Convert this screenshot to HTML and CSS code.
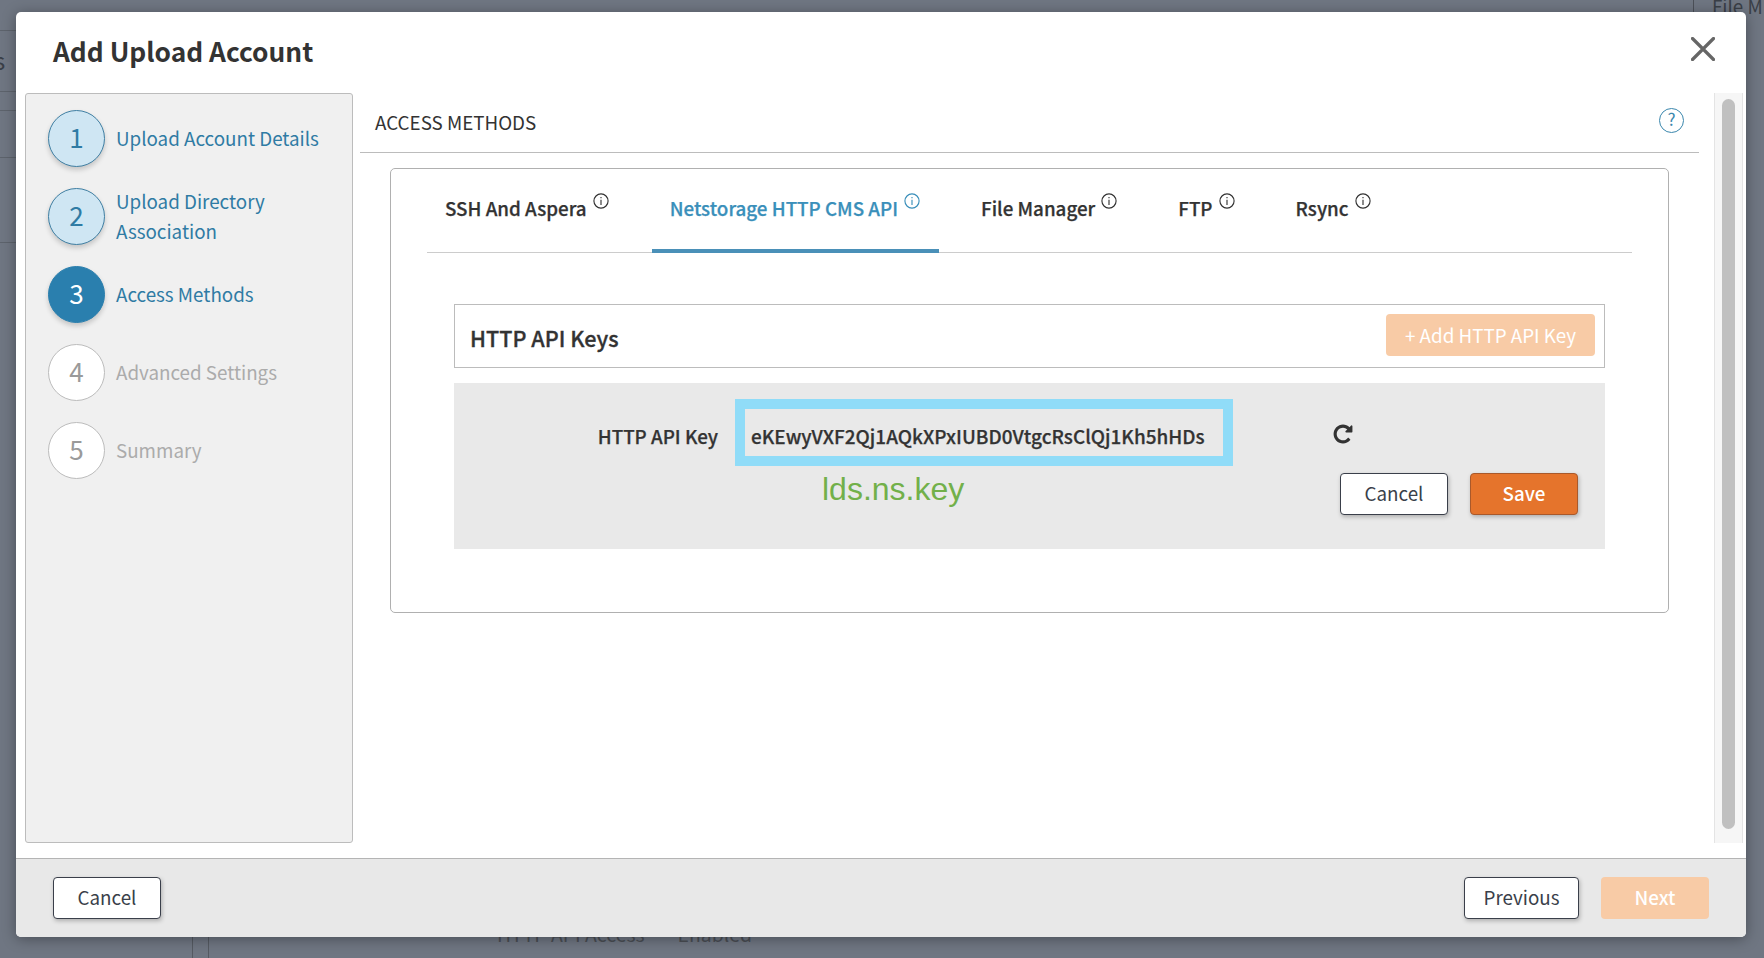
FILE: index.html
```html
<!doctype html>
<html lang="en">
<head>
	<meta charset="UTF-8">
	<title>Add Upload Account</title>
	<link rel="stylesheet" href="styles.css">
</head>
<body>
	<div class="page">
		<div class="rail-left">
			<div class="rail-row r30"></div>
			<div class="rail-row r61"><span class="rail-s">s</span></div>
			<div class="rail-row r19"></div>
			<div class="rail-row r47"></div>
			<div class="rail-row r85"></div>
		</div>
		<div class="page-mid">
			<div class="page-top"><span class="page-file">File M</span></div>
			<div class="page-bottom">
				<span class="page-divider"></span>
				<span class="page-access">HTTP API Access</span>
				<span class="page-enabled">Enabled</span>
			</div>
		</div>
	</div>

	<div class="modal">
		<div class="modal-head">
			<h1 class="modal-title">Add Upload Account</h1>
			<a href="javascript:;" class="modal-close">
				<svg width="24" height="24" viewBox="0 0 24 24"><path d="M1.5 1.5l21 21M22.5 1.5l-21 21" fill="none" stroke="#666" stroke-width="3.2" stroke-linecap="round"/></svg>
			</a>
		</div>

		<div class="modal-body">
			<ul class="steps">
				<li class="step done">
					<span class="step-num">1</span>
					<span class="step-label">Upload Account Details</span>
				</li>
				<li class="step done">
					<span class="step-num">2</span>
					<span class="step-label">Upload Directory Association</span>
				</li>
				<li class="step active">
					<span class="step-num">3</span>
					<span class="step-label">Access Methods</span>
				</li>
				<li class="step">
					<span class="step-num">4</span>
					<span class="step-label">Advanced Settings</span>
				</li>
				<li class="step">
					<span class="step-num">5</span>
					<span class="step-label">Summary</span>
				</li>
			</ul>

			<div class="content">
				<div class="section-head">
					<span class="section-title">ACCESS METHODS</span>
					<span class="help">?</span>
				</div>

				<div class="card">
					<div class="tabs">
						<a href="javascript:;" class="tab">SSH And Aspera
							<svg class="info" viewBox="0 0 14 14"><circle cx="7" cy="7" r="6.2"/><path d="M7 6v4.4M7 3.4v1.2"/></svg>
						</a>
						<a href="javascript:;" class="tab current">Netstorage HTTP CMS API
							<svg class="info" viewBox="0 0 14 14"><circle cx="7" cy="7" r="6.2"/><path d="M7 6v4.4M7 3.4v1.2"/></svg>
						</a>
						<a href="javascript:;" class="tab">File Manager
							<svg class="info" viewBox="0 0 14 14"><circle cx="7" cy="7" r="6.2"/><path d="M7 6v4.4M7 3.4v1.2"/></svg>
						</a>
						<a href="javascript:;" class="tab">FTP
							<svg class="info" viewBox="0 0 14 14"><circle cx="7" cy="7" r="6.2"/><path d="M7 6v4.4M7 3.4v1.2"/></svg>
						</a>
						<a href="javascript:;" class="tab">Rsync
							<svg class="info" viewBox="0 0 14 14"><circle cx="7" cy="7" r="6.2"/><path d="M7 6v4.4M7 3.4v1.2"/></svg>
						</a>
					</div>

					<div class="keys-head">
						<span class="keys-title">HTTP API Keys</span>
						<a href="javascript:;" class="btn btn-add">+ Add HTTP API Key</a>
					</div>

					<div class="key-form">
						<div class="key-row">
							<label class="key-label">HTTP API Key</label>
							<div class="key-mark"><span class="key-value">eKEwyVXF2Qj1AQkXPxIUBD0VtgcRsClQj1Kh5hHDs</span></div>
							<svg class="key-refresh" width="22" height="22" viewBox="0 0 1792 1792"><path fill="#333" d="M1664 256v448q0 26-19 45t-45 19h-448q-42 0-59-40-17-39 14-69l138-138q-148-137-349-137-104 0-198.5 40.5t-163.5 109.5-109.5 163.5-40.5 198.5 40.5 198.5 109.5 163.5 163.5 109.5 198.5 40.5q119 0 225-52t179-147q7-10 23-12 15 0 25 9l137 138q9 8 9.5 20.5t-7.5 22.5q-109 132-264 204.5t-327 72.5q-156 0-298-61t-245-164-164-245-61-298 61-298 164-245 245-164 298-61q147 0 284.5 55.5t244.5 156.5l130-129q29-31 70-14 39 17 39 59z"/></svg>
						</div>
						<div class="key-actions">
							<a href="javascript:;" class="btn btn-plain">Cancel</a>
							<a href="javascript:;" class="btn btn-save">Save</a>
						</div>
						<span class="key-note">lds.ns.key</span>
					</div>
				</div>
			</div>

			<div class="scroll"><div class="scroll-thumb"></div></div>
		</div>

		<div class="modal-foot">
			<a href="javascript:;" class="btn btn-plain btn-foot">Cancel</a>
			<div class="foot-right">
				<a href="javascript:;" class="btn btn-plain btn-prev">Previous</a>
				<a href="javascript:;" class="btn btn-next">Next</a>
			</div>
		</div>
	</div>
</body>
</html>
```

FILE: styles.css
```css
*{
	box-sizing: border-box;
}
html,body{
	height: 100%;
}
body{
	margin: 0;
	background-color: #6f7682;
	color: #333;
	font-family: "Noto Sans CJK SC", "Noto Sans", sans-serif;
	font-size: 18.8px;
	overflow: hidden;
}
h1,ul{
	margin: 0;
	padding: 0;
}
a{
	text-decoration: none;
	color: inherit;
}
li{
	list-style: none;
}

/* page behind the dialog */
.page{
	display: flex;
	height: 100%;
}
.rail-left{
	width: 16px;
}
.rail-row{
	border-bottom: 1px solid #5d636c;
}
.r30{ height: 31px; }
.r61{ height: 61px; line-height: 58px; }
.r19{ height: 19px; }
.r47{ height: 47px; }
.r85{ height: 85px; }
.rail-s{
	display: block;
	margin-left: -6px;
	color: #3a3f47;
	font-size: 24px;
}
.page-mid{
	flex: 1;
	display: flex;
	flex-direction: column;
	justify-content: space-between;
}
.page-top{
	display: flex;
	justify-content: flex-end;
	height: 20px;
	line-height: 12px;
	overflow: hidden;
}
.page-file{
	width: 71px;
	padding-left: 18px;
	border-left: 1px solid #4c5058;
	color: #3a3f47;
	overflow: hidden;
	white-space: nowrap;
}
.page-bottom{
	display: flex;
	align-items: flex-start;
	height: 21px;
	font-size: 19.4px;
	color: #4a4e55;
}
.page-divider{
	width: 17px;
	height: 21px;
	margin-left: 176px;
	border-left: 1px solid #555a62;
	border-right: 1px solid #555a62;
}
.page-access{
	margin-left: 288px;
	margin-top: -15px;
	line-height: 24px;
}
.page-enabled{
	margin-left: 33px;
	margin-top: -15px;
	line-height: 24px;
}

/* dialog */
.modal{
	position: absolute;
	left: 16px;
	top: 12px;
	width: 1730px;
	height: 925px;
	display: flex;
	flex-direction: column;
	background-color: #fff;
	border-radius: 5px;
	box-shadow: 0 2px 14px rgba(0,0,0,.35);
	overflow: hidden;
}
.modal-head{
	height: 81px;
	flex: none;
	display: flex;
	justify-content: space-between;
	padding: 21px 31px 0 37px;
}
.modal-title{
	font-size: 26.3px;
	font-weight: 700;
	line-height: 36px;
	color: #333;
}
.modal-close{
	height: 24px;
	margin-top: 4px;
}
.modal-body{
	flex: 1;
	display: flex;
	padding-left: 9px;
}

/* wizard steps */
.steps{
	width: 328px;
	height: 750px;
	flex: none;
	padding: 16px 22px;
	background-color: #f0f0f0;
	border: 1px solid #bcbcbc;
	border-radius: 3px;
}
.step{
	display: flex;
	align-items: center;
	gap: 11px;
	height: 57px;
	margin-bottom: 21px;
	color: #ababab;
}
.step-num{
	width: 57px;
	height: 57px;
	flex: none;
	border: 1px solid #bcbcbc;
	border-radius: 50%;
	background-color: #fff;
	font-size: 26px;
	line-height: 52px;
	text-align: center;
	color: #9a9a9a;
}
.step-label{
	line-height: 30px;
	margin-top: -2px;
}
.step.done,.step.active{
	color: #2f7ba4;
}
.step.done .step-num{
	background-color: #cfe6f3;
	border-color: #3f7fa3;
	color: #2f7ba4;
	box-shadow: 0 3px 5px rgba(0,0,0,.18);
}
.step.active .step-num{
	background-color: #2a7fae;
	border-color: #2a7fae;
	color: #fff;
	box-shadow: 0 3px 5px rgba(0,0,0,.18);
}

/* main column */
.content{
	width: 1339px;
	margin-left: 7px;
	flex: none;
}
.section-head{
	height: 60px;
	display: flex;
	justify-content: space-between;
	align-items: center;
	padding: 0 15px;
	border-bottom: 1px solid #bcbcbc;
}
.section-title{
	line-height: 26px;
	margin-top: -2px;
}
.help{
	width: 25px;
	height: 25px;
	margin-top: -4px;
	border: 1.5px solid #3b87ad;
	border-radius: 50%;
	color: #3b87ad;
	font-size: 17px;
	line-height: 20px;
	text-align: center;
}
.card{
	height: 445px;
	margin: 15px 30px 0 30px;
	padding: 0 36px;
	border: 1px solid #b0b0b0;
	border-radius: 5px;
}
.tabs{
	height: 84px;
	display: flex;
	gap: 24px;
	border-bottom: 1px solid #ccc;
}
.tab{
	height: 84px;
	padding: 25px 19px 0 18px;
	display: flex;
	align-items: flex-start;
	gap: 6px;
	font-weight: 500;
	-webkit-text-stroke: .25px;
	line-height: 28px;
	white-space: nowrap;
}
.tab.current{
	color: #3a8fba;
	border-bottom: 4px solid #4a90b8;
}
.info{
	width: 16px;
	height: 16px;
	margin-top: -1px;
	fill: none;
	stroke: #333;
	stroke-width: 1;
}
.tab.current .info{
	stroke: #3a8fba;
}
.keys-head{
	height: 64px;
	margin: 51px 27px 0;
	padding: 9px 9px 0 15px;
	display: flex;
	justify-content: space-between;
	border: 1px solid #bcbcbc;
}
.keys-title{
	font-size: 21.6px;
	font-weight: 500;
	-webkit-text-stroke: .3px;
	line-height: 48px;
}
.btn{
	display: block;
	height: 42px;
	border-radius: 4px;
	line-height: 38px;
	text-align: center;
	border: 1px solid transparent;
}
.btn-add{
	width: 209px;
	background-color: #f8cba6;
	color: #fff;
	line-height: 40px;
}
.key-form{
	position: relative;
	height: 166px;
	margin: 15px 27px 0;
	background-color: #e9e9e9;
	padding-top: 16px;
}
.key-row{
	display: flex;
	align-items: center;
	height: 67px;
}
.key-label{
	width: 264px;
	margin-top: 7px;
	text-align: right;
	font-weight: 500;
	-webkit-text-stroke: .25px;
	line-height: 28px;
}
.key-mark{
	width: 498px;
	height: 67px;
	margin-left: 17px;
	padding-left: 6px;
	border: 10px solid #90dcf8;
	font-size: 18.95px;
	font-weight: 500;
	-webkit-text-stroke: .25px;
	line-height: 54px;
	white-space: nowrap;
}
.key-refresh{
	margin-left: 99px;
	margin-top: 2px;
}
.key-actions{
	display: flex;
	justify-content: flex-end;
	gap: 22px;
	margin-top: 7px;
	padding-right: 27px;
}
.btn-plain{
	width: 108px;
	background-color: #fff;
	border-color: #3a3f4a;
	color: #3a3f4a;
	box-shadow: 1px 2px 4px rgba(0,0,0,.25);
}
.btn-save{
	width: 108px;
	background-color: #e5742c;
	border-color: #a9592b;
	color: #fff;
	font-weight: 500;
	box-shadow: 1px 2px 4px rgba(0,0,0,.25);
}
.key-note{
	position: absolute;
	left: 368px;
	top: 86px;
	font-family: "Liberation Sans", sans-serif;
	font-size: 32px;
	line-height: 40px;
	color: #72b04a;
}

/* scrollbar */
.scroll{
	width: 29px;
	height: 750px;
	margin-left: 15px;
	flex: none;
	padding: 6px 7px 0;
	background-color: #f6f6f6;
	border-left: 1px solid #e4e4e4;
	border-right: 1px solid #e4e4e4;
}
.scroll-thumb{
	height: 730px;
	background-color: #c0c0c0;
	border-radius: 8px;
}

/* footer */
.modal-foot{
	height: 79px;
	flex: none;
	display: flex;
	justify-content: space-between;
	padding: 18px 37px 0 37px;
	background-color: #e8e8e8;
	border-top: 1px solid #b4b4b4;
}
.foot-right{
	display: flex;
	gap: 22px;
}
.btn-foot{
	width: 108px;
}
.btn-prev{
	width: 115px;
}
.btn-next{
	width: 108px;
	background-color: #f8cba6;
	color: #fff;
	font-weight: 500;
}
```
